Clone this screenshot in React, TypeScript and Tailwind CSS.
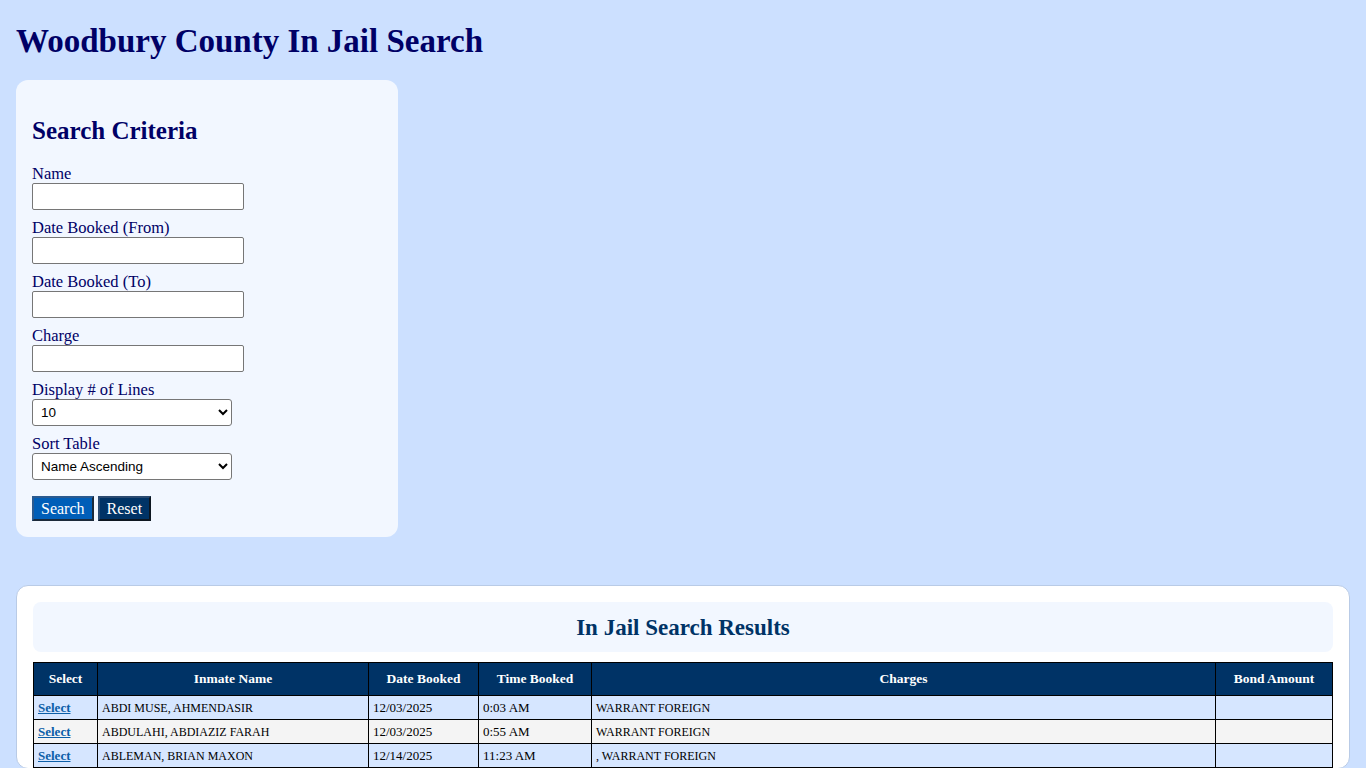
import React from 'react';

const serif = "font-['Liberation_Serif','Times_New_Roman',serif]";

const rows = [
  { name: 'ABDI MUSE, AHMENDASIR', date: '12/03/2025', time: '0:03 AM', charges: 'WARRANT FOREIGN' },
  { name: 'ABDULAHI, ABDIAZIZ FARAH', date: '12/03/2025', time: '0:55 AM', charges: 'WARRANT FOREIGN' },
  { name: 'ABLEMAN, BRIAN MAXON', date: '12/14/2025', time: '11:23 AM', charges: ', WARRANT FOREIGN' },
];

function Field({ label, children }: { label: string; children: React.ReactNode }) {
  return (
    <div className="flex flex-col">
      <label className="text-[16.5px] leading-[18px] text-[#000066]">{label}</label>
      {children}
    </div>
  );
}

const inputCls = 'w-[212px] h-[27px] bg-white border border-[#767676] rounded-[2px] px-1 text-[13px]';
const selectCls =
  "w-[200px] h-[27px] bg-white border border-[#767676] rounded-[3px] pl-[4px] text-[13.5px] text-black font-['Liberation_Sans',Arial,sans-serif]";

export default function App() {
  return (
    <div className={`min-h-screen bg-[#cce0ff] px-4 pt-[21px] pb-10 ${serif}`}>
      <h1 className="text-[33px] leading-[40px] font-bold text-[#000066] mb-[19px]">Woodbury County In Jail Search</h1>

      {/* Search criteria panel */}
      <div className="w-[382px] bg-[#f2f7ff] rounded-xl px-4 pt-[35px] pb-4">
        <h2 className="text-[25px] leading-[32px] font-bold text-[#000066] mb-[18px]">Search Criteria</h2>
        <div className="flex flex-col gap-[9px]">
          <Field label="Name">
            <input type="text" className={inputCls} />
          </Field>
          <Field label="Date Booked (From)">
            <input type="text" className={inputCls} />
          </Field>
          <Field label="Date Booked (To)">
            <input type="text" className={inputCls} />
          </Field>
          <Field label="Charge">
            <input type="text" className={inputCls} />
          </Field>
          <Field label="Display # of Lines">
            <select className={selectCls} defaultValue="10">
              <option>10</option>
              <option>25</option>
              <option>50</option>
            </select>
          </Field>
          <Field label="Sort Table">
            <select className={selectCls} defaultValue="Name Ascending">
              <option>Name Ascending</option>
              <option>Name Descending</option>
            </select>
          </Field>
        </div>
        <div className="flex gap-1 mt-4">
          <button className="h-[25px] px-[7px] bg-[#005eb8] text-white text-[16px] leading-none border-2 border-[#1c2a3a] border-t-[#2a5a90] border-l-[#2a5a90]">
            Search
          </button>
          <button className="h-[25px] px-[7px] bg-[#003366] text-white text-[16px] leading-none border-2 border-[#0d1620] border-t-[#2a4a70] border-l-[#2a4a70]">
            Reset
          </button>
        </div>
      </div>

      {/* Results */}
      <div className="mt-12 bg-white border border-[#b9cbe6] rounded-xl p-4 pb-0">
        <div className="h-[50px] bg-[#f2f7ff] rounded-lg flex items-center justify-center">
          <h2 className="text-[23px] leading-[30px] pt-[2px] font-bold text-[#003366]">In Jail Search Results</h2>
        </div>
        <table className="mt-[10px] w-full table-fixed border-collapse">
          <colgroup>
            <col className="w-[64px]" />
            <col className="w-[271px]" />
            <col className="w-[110px]" />
            <col className="w-[113px]" />
            <col />
            <col className="w-[117px]" />
          </colgroup>
          <thead>
            <tr className="h-[33px] bg-[#003366] text-white text-[13.5px]">
              {['Select', 'Inmate Name', 'Date Booked', 'Time Booked', 'Charges', 'Bond Amount'].map((h) => (
                <th key={h} className="border border-black font-bold text-center">
                  {h}
                </th>
              ))}
            </tr>
          </thead>
          <tbody className="text-[12px]">
            {rows.map((r, i) => (
              <tr key={r.name} className={`h-[24px] ${i % 2 === 0 ? 'bg-[#d6e6ff]' : 'bg-[#f4f4f4]'}`}>
                <td className="border border-black px-1">
                  <a href="#" className="font-bold underline text-[13px] text-[#0b5ea8]">
                    Select
                  </a>
                </td>
                <td className="border border-black px-1 text-black">{r.name}</td>
                <td className="border border-black px-1 text-black text-[13px]">{r.date}</td>
                <td className="border border-black px-1 text-black text-[13px]">{r.time}</td>
                <td className="border border-black px-1 text-black">{r.charges}</td>
                <td className="border border-black px-1"></td>
              </tr>
            ))}
          </tbody>
        </table>
      </div>
    </div>
  );
}
